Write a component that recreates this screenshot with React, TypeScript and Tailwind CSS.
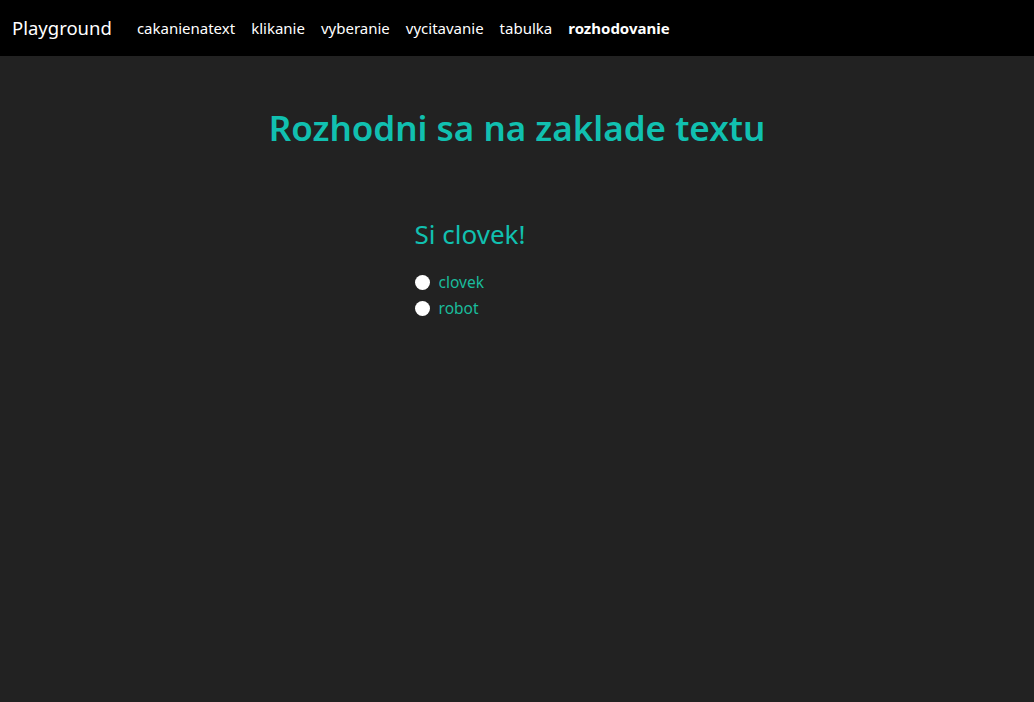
const links = ["cakanienatext", "klikanie", "vyberanie", "vycitavanie", "tabulka", "rozhodovanie"];

export default function App() {
  return (
    <div className="min-h-[702px] bg-[#222222] font-['Noto_Sans',sans-serif]">
      <nav className="flex h-14 items-center bg-black px-3">
        <span className="mr-[25px] text-[18.5px] text-white">Playground</span>
        <ul className="flex gap-4 text-[15px] text-white">
          {links.map((l) => (
            <li key={l} className={l === "rozhodovanie" ? "font-bold" : ""}>
              {l}
            </li>
          ))}
        </ul>
      </nav>
      <h1 className="mt-[46px] text-center text-[35px] font-semibold text-[#11c0b0]">
        Rozhodni sa na zaklade textu
      </h1>
      <div className="ml-[40%] mt-[60px] pl-px">
        <h2 className="text-[26px] text-[#11c0b0]">Si clovek!</h2>
        <div className="mt-[17px] flex flex-col gap-[3px] text-[15.5px] text-[#1abc9c]">
          {["clovek", "robot"].map((o) => (
            <label key={o} className="flex items-center gap-[9px]">
              <input type="radio" name="choice" className="h-[15px] w-[15px] appearance-none rounded-full bg-white" />
              {o}
            </label>
          ))}
        </div>
      </div>
    </div>
  );
}
